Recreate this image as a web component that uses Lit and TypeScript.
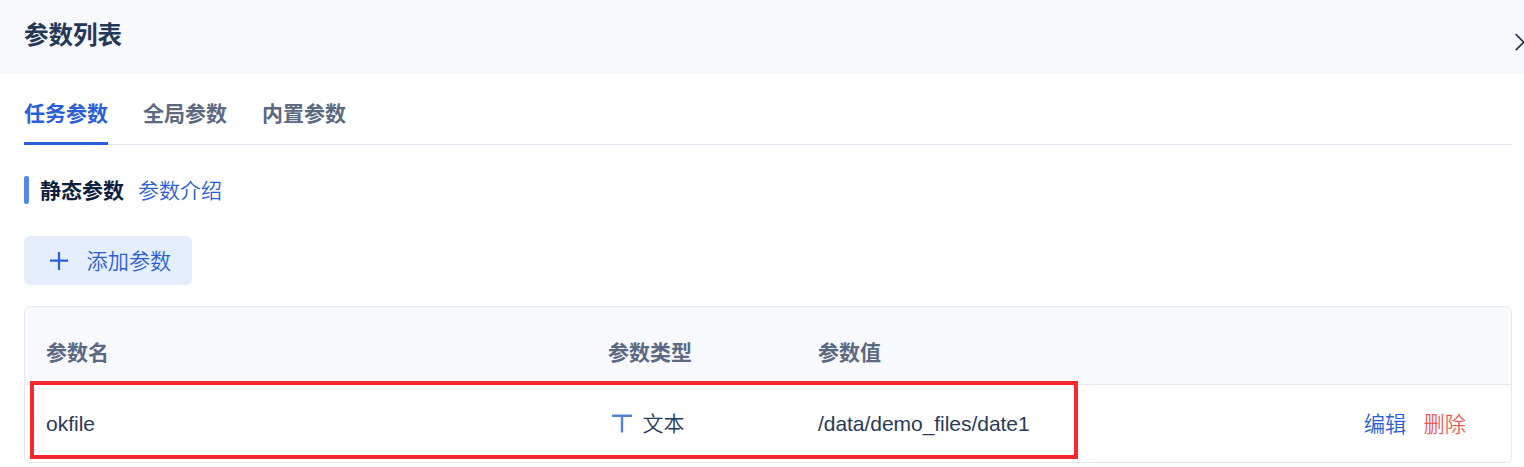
import { LitElement, html, css } from "lit";
import { customElement, property, state } from "lit/decorators.js";
import { classMap } from "lit/directives/class-map.js";

interface Param {
  name: string;
  type: string;
  value: string;
}

@customElement("param-table")
class ParamTable extends LitElement {
  static styles = css`
    :host {
      display: block;
      position: relative;
      box-sizing: border-box;
      height: 157px;
      border: 1px solid #e4e8f1;
      border-radius: 6px;
      overflow: hidden;
    }
    .row {
      display: grid;
      grid-template-columns: 562px 210px 1fr auto;
      align-items: center;
      box-sizing: border-box;
      padding: 0 45px 0 21px;
      height: 77px;
    }
    .head {
      height: 78px;
      padding-top: 14px;
      background: #f8f9fd;
      border-bottom: 1px solid #e4e8f1;
      color: #5b6982;
      font-weight: 700;
    }
    .type {
      display: flex;
      align-items: center;
      padding-left: 4px;
      gap: 10.6px;
    }
    .type svg {
      display: block;
    }
    .value {
      letter-spacing: -.04px;
    }
    .actions {
      display: flex;
      gap: 17px;
      padding-top: 2px;
      font-size: 21.3px;
    }
    .edit {
      color: #2b5fd9;
    }
    .delete {
      color: #ec5b56;
    }
    .highlight {
      position: absolute;
      left: 5px;
      top: 74px;
      width: 1048px;
      height: 78px;
      box-sizing: border-box;
      border: 4px solid #fc272d;
      pointer-events: none;
    }
  `;

  @property({ type: Array }) params: Param[] = [];

  render() {
    return html`
      <div class="row head">
        <span>参数名</span>
        <span>参数类型</span>
        <span>参数值</span>
      </div>
      ${this.params.map(
        (param) => html`
          <div class="row">
            <span>${param.name}</span>
            <span class="type">
              <svg width="20" height="20" viewBox="0 0 20 20" fill="none" stroke="#5582d2" stroke-width="2.4">
                <path d="M0 1.8h20M10 1.8V18.4" />
              </svg>
              ${param.type}
            </span>
            <span class="value">${param.value}</span>
            <span class="actions">
              <span class="edit">编辑</span>
              <span class="delete">删除</span>
            </span>
          </div>
        `
      )}
      <div class="highlight"></div>
    `;
  }
}

@customElement("app-root")
class AppRoot extends LitElement {
  static styles = css`
    :host {
      display: block;
      height: 467px;
      overflow: hidden;
      background: #fff;
      color: #2a3a58;
      font-family: "Liberation Sans", "Noto Sans CJK SC", sans-serif;
      font-size: 21px;
      line-height: 30px;
      font-weight: 350;
    }
    .header {
      display: flex;
      justify-content: space-between;
      box-sizing: border-box;
      height: 75px;
      padding: 18px 0 0 24px;
      background: #f8f9fd;
    }
    .title {
      font-size: 24.5px;
      line-height: 36px;
      font-weight: 700;
      color: #263857;
    }
    .close {
      flex: none;
      width: 9px;
      height: 18px;
      margin-top: 15px;
    }
    .content {
      padding: 0 12px 0 24px;
    }
    .tabs {
      display: flex;
      gap: 35px;
      box-sizing: border-box;
      height: 70px;
      border-bottom: 1px solid #e1e6f2;
      font-weight: 700;
      color: #5b6982;
    }
    .tab {
      box-sizing: border-box;
      height: 70px;
      padding-top: 24px;
    }
    .tab.active {
      color: #2b5fd9;
      border-bottom: 3px solid #2b5fd9;
    }
    .section {
      display: flex;
      align-items: center;
      height: 28px;
      margin-top: 31px;
      line-height: 32px;
    }
    .bar {
      width: 5px;
      height: 28px;
      margin-right: 11px;
      border-radius: 2px;
      background: #5288ee;
    }
    .section-title,
    .link {
      padding-top: 2px;
    }
    .section-title {
      margin-right: 14px;
      font-weight: 700;
      color: #0d1f41;
    }
    .link {
      color: #2b5fd9;
    }
    .add {
      display: flex;
      align-items: center;
      box-sizing: border-box;
      width: 168px;
      height: 49px;
      margin: 32px 0 21px;
      padding: 0 0 0 26px;
      gap: 18.5px;
      border: 0;
      border-radius: 6px;
      background: #e5eeff;
      color: #2b5fd9;
      font: inherit;
      font-size: 21.2px;
      white-space: nowrap;
    }
    .add span {
      padding-top: 2px;
    }
  `;

  @state() private activeTab = 0;

  private tabs = ["任务参数", "全局参数", "内置参数"];

  private params: Param[] = [
    { name: "okfile", type: "文本", value: "/data/demo_files/date1" },
  ];

  render() {
    return html`
      <div class="header">
        <div class="title">参数列表</div>
        <svg class="close" viewBox="0 0 9 18" fill="none" stroke="#263857" stroke-width="1.8">
          <path d="M.7 1.2l16 16M.7 17.2l16-16" />
        </svg>
      </div>
      <div class="content">
        <div class="tabs">
          ${this.tabs.map(
            (tab, i) => html`
              <div
                class=${classMap({ tab: true, active: i === this.activeTab })}
                @click=${() => (this.activeTab = i)}
              >${tab}</div>
            `
          )}
        </div>
        <div class="section">
          <span class="bar"></span>
          <span class="section-title">静态参数</span>
          <span class="link">参数介绍</span>
        </div>
        <button class="add">
          <svg width="18" height="18" viewBox="0 0 18 18" fill="none" stroke="currentColor" stroke-width="2.2">
            <path d="M0 8.7h18M9 0v18" />
          </svg>
          <span>添加参数</span>
        </button>
        <param-table .params=${this.params}></param-table>
      </div>
    `;
  }
}
